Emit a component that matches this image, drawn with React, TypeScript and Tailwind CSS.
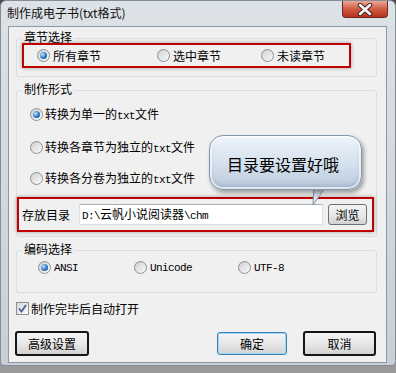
const Radio = ({ checked }: { checked?: boolean }) => (
  <span className="w-[13px] h-[13px] shrink-0 rounded-full border border-[#8e8f8f] bg-gradient-to-br from-[#d0d0d0] to-[#fbfbfb] flex items-center justify-center">
    {checked && (
      <span className="w-[7px] h-[7px] rounded-full bg-[radial-gradient(circle_at_35%_35%,#bfe6ff,#2a78c8_55%,#0f3e7a)]" />
    )}
  </span>
);

const Mono = ({ children }: { children: React.ReactNode }) => (
  <span className="font-['Liberation_Mono',monospace] text-[11px] tracking-[-0.6px]">{children}</span>
);

const Legend = ({ children }: { children: React.ReactNode }) => (
  <span className="absolute -top-[10px] left-[5px] px-[2px] bg-[#f0f0f0] leading-[16px]">{children}</span>
);

const Btn = ({ children, w, primary }: { children: React.ReactNode; w: string; primary?: boolean }) => (
  <div
    className={`${w} flex items-center justify-center rounded-[3px] bg-gradient-to-b from-[#f4f4f4] via-[#e8e8e8] to-[#d2d2d2] ${
      primary ? "h-[23px] border border-[#3c7fb1] shadow-[inset_0_0_0_1px_#9fd8f6]" : "h-[25px] border-2 border-[#161616]"
    }`}
  >
    {children}
  </div>
);

export default function App() {
  return (
    <div className="relative w-[396px] h-[373px] overflow-hidden bg-gradient-to-b from-[#4a4a4a] to-[#9a9a9a] font-['Noto_Sans_CJK_SC',sans-serif] text-[12px] leading-[16px] text-black">
      <div className="h-[366px] rounded-t-[6px] rounded-b-[4px] border border-[#858e97] bg-gradient-to-b from-[#dde2e7] to-[#c8cfd6] flex flex-col">
        {/* title bar */}
        <div className="h-[25px] flex items-start">
          <span className="pl-[6px] pt-[4px] text-[#111]">制作成电子书(txt格式)</span>
          <div className="ml-auto mr-[7px] w-[46px] h-[17px] rounded-b-[4px] border border-t-0 border-[#6b2a20] bg-gradient-to-b from-[#e9a898] via-[#d05a42] to-[#b8321c] flex items-center justify-center">
            <svg width="16" height="13" viewBox="0 0 16 13">
              <path d="M3 2 L13 11 M13 2 L3 11" stroke="#4a2a26" strokeWidth="4.5" strokeLinecap="round" />
              <path d="M3 2 L13 11 M13 2 L3 11" stroke="#ffffff" strokeWidth="2.4" strokeLinecap="round" />
            </svg>
          </div>
        </div>

        {/* client area */}
        <div className="ml-[7px] w-[379px] h-[337px] border border-[#8d98a3] bg-[#f0f0f0] flex flex-col">
          {/* 章节选择 */}
          <div className="relative ml-[7px] mt-[11px] w-[361px] h-[39px] rounded-[3px] border border-[#d5dfe5]">
            <Legend>章节选择</Legend>
            <div className="mt-[10px] pl-[20px] flex items-center h-[13px]">
              <div className="w-[120px] flex items-center gap-[3px]">
                <Radio checked />
                <span>所有章节</span>
              </div>
              <div className="w-[104px] flex items-center gap-[3px]">
                <Radio />
                <span>选中章节</span>
              </div>
              <div className="flex items-center gap-[3px]">
                <Radio />
                <span>未读章节</span>
              </div>
            </div>
          </div>

          {/* 制作形式 */}
          <div className="relative ml-[7px] mt-[13px] w-[361px] h-[147px] rounded-[3px] border border-[#d5dfe5] flex flex-col">
            <Legend>制作形式</Legend>
            <div className="mt-[17px] pl-[13px] flex items-center gap-[2px] h-[13px]">
              <Radio checked />
              <span>转换为单一的<Mono>txt</Mono>文件</span>
            </div>
            <div className="mt-[20px] pl-[13px] flex items-center gap-[2px] h-[13px]">
              <Radio />
              <span>转换各章节为独立的<Mono>txt</Mono>文件</span>
            </div>
            <div className="mt-[18px] pl-[13px] flex items-center gap-[2px] h-[13px]">
              <Radio />
              <span>转换各分卷为独立的<Mono>txt</Mono>文件</span>
            </div>
            <div className="mt-[19px] pl-[5px] flex items-center h-[21px]">
              <span className="w-[48px]">存放目录</span>
              <div className="ml-[9px] w-[244px] h-[21px] bg-white border border-[#dbdfe6] border-t-[#abadb3] flex items-center pl-[2px]">
                <span>
                  <Mono>D:\</Mono>云帆小说阅读器<Mono>\chm</Mono>
                </span>
              </div>
              <div className="ml-[5px] w-[39px] h-[21px] rounded-[3px] border border-[#707070] bg-gradient-to-b from-[#f4f4f4] via-[#e9e9e9] to-[#d3d3d3] flex items-center justify-center">
                浏览
              </div>
            </div>
          </div>

          {/* 编码选择 */}
          <div className="relative ml-[7px] mt-[13px] w-[361px] h-[43px] rounded-[3px] border border-[#d5dfe5]">
            <Legend>编码选择</Legend>
            <div className="mt-[10px] pl-[21px] flex items-center h-[13px]">
              <div className="w-[96px] flex items-center gap-[3px]">
                <Radio checked />
                <Mono>ANSI</Mono>
              </div>
              <div className="w-[104px] flex items-center gap-[3px]">
                <Radio />
                <Mono>Unicode</Mono>
              </div>
              <div className="flex items-center gap-[3px]">
                <Radio />
                <Mono>UTF-8</Mono>
              </div>
            </div>
          </div>

          {/* checkbox */}
          <div className="ml-[7px] mt-[9px] flex items-center gap-[2px] h-[13px]">
            <span className="w-[13px] h-[13px] border border-[#8e8f8f] bg-gradient-to-br from-[#d8d8d8] to-[#fbfbfb] flex items-center justify-center">
              <svg width="11" height="11" viewBox="0 0 11 11">
                <path d="M2 5.5 L4.5 8.5 L9 2" fill="none" stroke="#4b5f98" strokeWidth="1.8" />
              </svg>
            </span>
            <span>制作完毕后自动打开</span>
          </div>

          {/* buttons */}
          <div className="mt-[16px] flex items-center h-[25px]">
            <div className="ml-[6px]">
              <Btn w="w-[74px]">高级设置</Btn>
            </div>
            <div className="ml-[128px]">
              <Btn w="w-[70px]" primary>确定</Btn>
            </div>
            <div className="ml-[16px]">
              <Btn w="w-[73px]">取消</Btn>
            </div>
          </div>
        </div>
      </div>

      {/* annotations */}
      <div className="absolute left-[22px] top-[43px] w-[329px] h-[25px] border-2 border-[#c00000] shadow-[0_0_4px_rgba(0,0,0,0.35)]" />
      <div className="absolute left-[17px] top-[197px] w-[357px] h-[35px] border-2 border-[#c00000] shadow-[0_0_4px_rgba(0,0,0,0.35)]" />

      <svg className="absolute left-[305px] top-[183px]" width="30" height="24" viewBox="0 0 30 24">
        <defs>
          <linearGradient id="tail" x1="0" y1="0" x2="0" y2="1">
            <stop offset="0" stopColor="#bccbdb" />
            <stop offset="1" stopColor="#e2eaf2" />
          </linearGradient>
        </defs>
        <polygon points="9,2 22,2 8,22" fill="url(#tail)" stroke="#7f95ad" strokeWidth="1" />
      </svg>
      <div className="absolute left-[209px] top-[135px] w-[153px] h-[55px] rounded-[14px] border border-[#7f95ad] bg-gradient-to-b from-[#eef4fa] via-[#d6e2ee] to-[#b9cadb] shadow-[inset_0_0_0_2px_rgba(255,255,255,0.7),inset_0_-3px_5px_rgba(90,110,140,0.35),2px_3px_4px_rgba(0,0,0,0.35)] flex items-center pl-[17px] pt-[3px] text-[16px] leading-[20px]">
        目录要设置好哦
      </div>
    </div>
  );
}
